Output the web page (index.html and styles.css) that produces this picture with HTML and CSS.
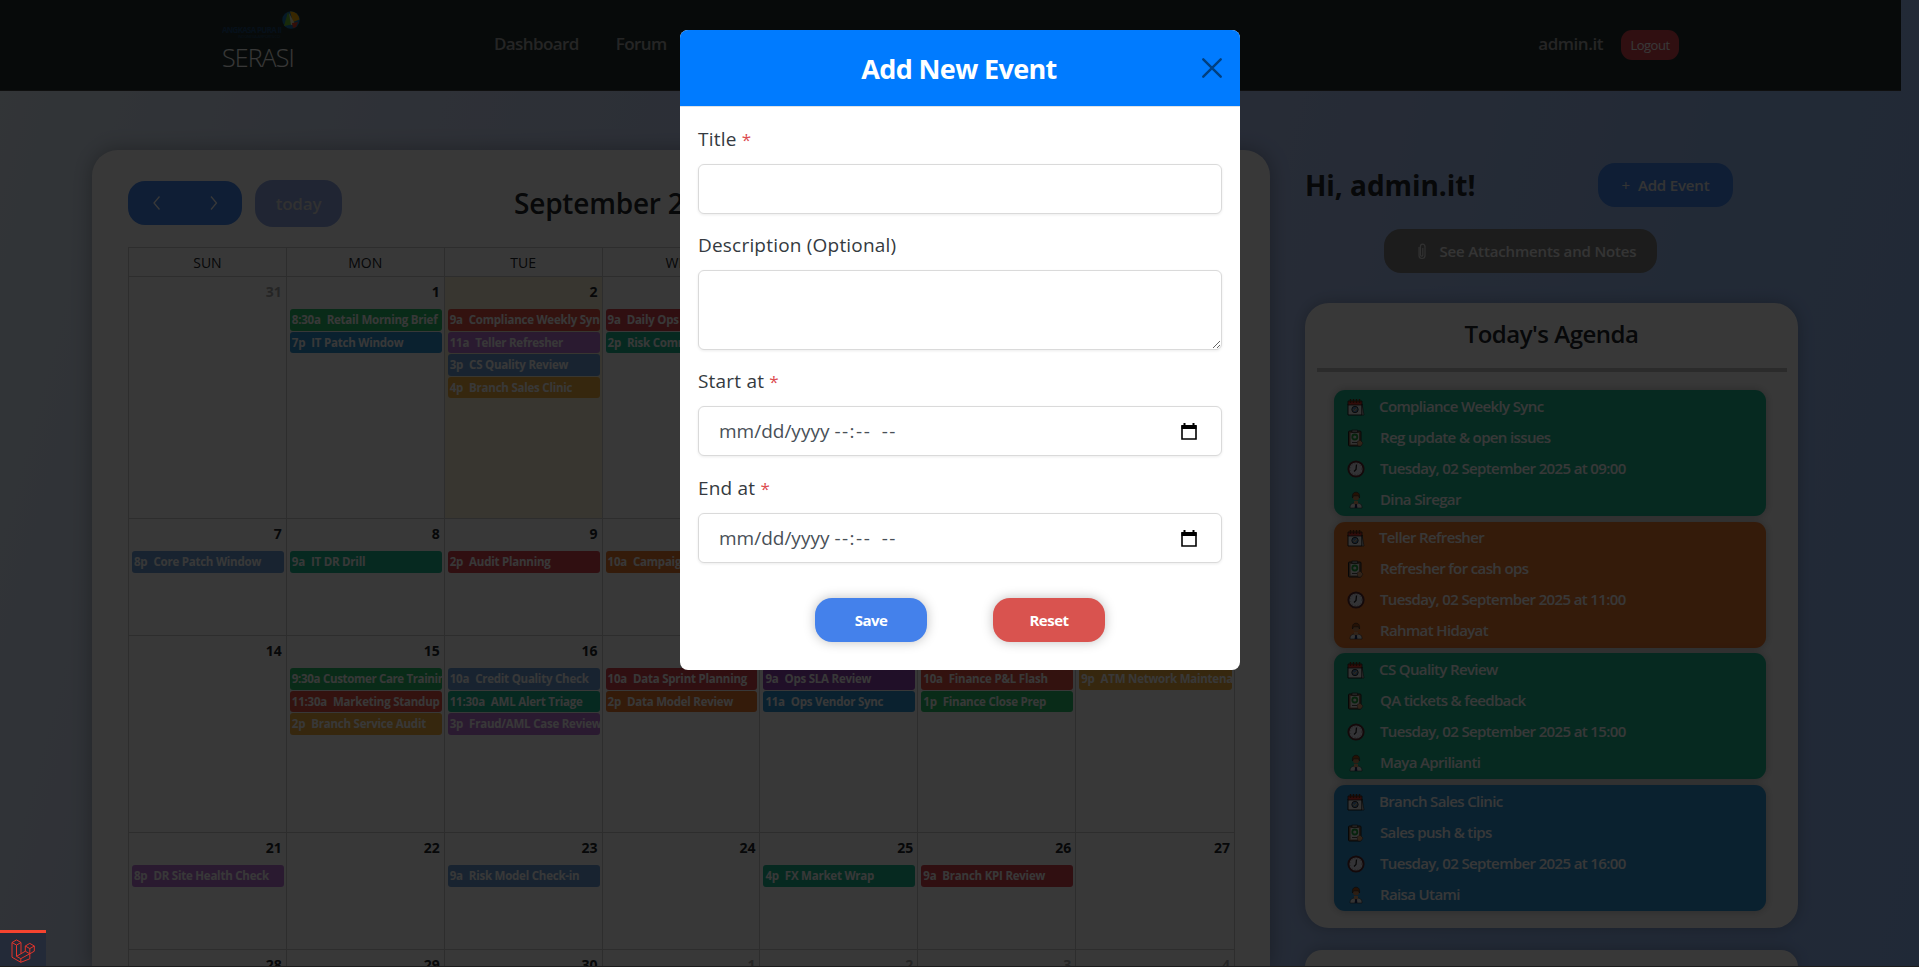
FILE: index.html
```html
<!DOCTYPE html>
<html lang="en">
<head>
<meta charset="utf-8">
<title>SERASI</title>
<link rel="stylesheet" href="styles.css">
</head>
<body>
<svg class="defs" width="0" height="0">
  <symbol id="i-cal" viewBox="0 0 18 18"><path d="M1 6h14v11H1z" fill="#eee" stroke="#222" stroke-width="1"/><path d="M1 3h14v4H1z" fill="#e03a2f" stroke="#222" stroke-width=".8"/><path d="M3.500 1v4M6.500 1v4M9.500 1v4M12.500 1v4" stroke="#5a2a10" stroke-width="1.500"/><circle cx="8" cy="11.500" r="3.200" fill="#5a8fc0" stroke="#333"/><path d="M6.500 11.500l1.200 1.300 2-2.500" stroke="#ffc060" fill="none"/><path d="M15 6l2 11h-2z" fill="#ddd" stroke="#222" stroke-width=".6"/></symbol>
  <symbol id="i-note" viewBox="0 0 18 18"><rect x="1.500" y="2" width="12.500" height="15" rx="1" fill="#8c6a50" stroke="#222"/><rect x="3.500" y="4" width="8.500" height="11.500" fill="#e8e8e8"/><rect x="5" y="1" width="5.500" height="2.600" fill="#999" stroke="#222" stroke-width=".6"/><circle cx="7.800" cy="8" r="2.500" fill="none" stroke="#1fa03c" stroke-width="1.800"/><path d="M5 13.500h5" stroke="#555"/><path d="M10 13l3-2 3 3-2 3h-3z" fill="#e0a070" stroke="#333" stroke-width=".5"/></symbol>
  <symbol id="i-clock" viewBox="0 0 18 18"><circle cx="9" cy="9" r="7.600" fill="#e8e8f4" stroke="#5a2a30" stroke-width="2"/><circle cx="9" cy="9" r="5.600" fill="none" stroke="#aaa" stroke-dasharray="1 2"/><path d="M9.500 4.500L9 9.500 7 11.500" stroke="#222" stroke-width="1.300" fill="none"/></symbol>
  <symbol id="i-man" viewBox="0 0 18 18"><path d="M3 17c0-4 2-5 6-5s6 1 6 5z" fill="#eee" stroke="#333" stroke-width=".6"/><path d="M7 10h4v3l-2 1.500L7 13z" fill="#e0a070"/><circle cx="9" cy="6.500" r="3" fill="#c88858"/><path d="M5.500 7c-.5-4 1-5.800 3.500-5.800S13 3 12.500 7L11.500 4.800h-5z" fill="#a85018" stroke="#222" stroke-width=".6"/><path d="M8.200 13h1.600l.6 4H7.600z" fill="#203060"/></symbol>
</svg>

<header class="topbar">
  <div class="brand">
    <svg class="logo" width="82" height="30" viewBox="0 0 82 30"><circle cx="69" cy="10" r="8.700" fill="#1b77b5"/><path d="M68 1.500a8.700 8.700 0 0 1 9.500 8L71 12z" fill="#ffb300"/><path d="M66 2l-4 14 8-1.500z" fill="#6fc030"/><path d="M67 3l6 11-4 1z" fill="#f0f0c0"/><path d="M70 13l6-1-2 5-3 1z" fill="#e8402a"/><text x="0" y="23" class="logo-name" textLength="60">ANGKASA PURA II</text><text x="16" y="28" class="logo-sub" textLength="42">INDONESIA AIRPORTS CO</text></svg>
    <div class="brand-name">SERASI</div>
  </div>
  <nav class="nav"><a>Dashboard</a><a>Forum</a></nav>
  <div class="user"><span class="user-name">admin.it</span><button class="logout">Logout</button></div>
</header>

<main class="page">
  <section class="calendar">
    <div class="toolbar">
      <div class="prevnext">
        <svg width="12" height="16" viewBox="0 0 12 16"><path d="M8.500 1.500L3 8l5.500 6.500"/></svg>
        <svg width="12" height="16" viewBox="0 0 12 16"><path d="M3 1.500L8.500 8 3 14.500"/></svg>
      </div>
      <button class="today">today</button>
      <h2 class="month">September 2025</h2>
    </div>
    <div class="grid">
      <div class="week head"><div>SUN</div><div>MON</div><div>TUE</div><div>WED</div><div>THU</div><div>FRI</div><div>SAT</div></div>
      <div class="week w1">
        <div class="day out"><b>31</b></div>
        <div class="day"><b>1</b><p class="ev green"><i>8:30a</i>Retail Morning Brief</p><p class="ev blue"><i>7p</i>IT Patch Window</p></div>
        <div class="day now"><b>2</b><p class="ev red"><i>9a</i>Compliance Weekly Sync</p><p class="ev violet"><i>11a</i>Teller Refresher</p><p class="ev steel"><i>3p</i>CS Quality Review</p><p class="ev gold"><i>4p</i>Branch Sales Clinic</p></div>
        <div class="day"><b>3</b><p class="ev crimson"><i>9a</i>Daily Ops</p><p class="ev teal"><i>2p</i>Risk Comm</p></div>
        <div class="day"><b>4</b></div><div class="day"><b>5</b></div><div class="day"><b>6</b></div>
      </div>
      <div class="week w2">
        <div class="day"><b>7</b><p class="ev steel"><i>8p</i>Core Patch Window</p></div>
        <div class="day"><b>8</b><p class="ev teal"><i>9a</i>IT DR Drill</p></div>
        <div class="day"><b>9</b><p class="ev crimson"><i>2p</i>Audit Planning</p></div>
        <div class="day"><b>10</b><p class="ev orange"><i>10a</i>Campaign</p></div>
        <div class="day"><b>11</b></div><div class="day"><b>12</b></div><div class="day"><b>13</b></div>
      </div>
      <div class="week w3">
        <div class="day"><b>14</b></div>
        <div class="day"><b>15</b><p class="ev green tight"><i>9:30a</i>Customer Care Training</p><p class="ev red"><i>11:30a</i>Marketing Standup</p><p class="ev gold"><i>2p</i>Branch Service Audit</p></div>
        <div class="day"><b>16</b><p class="ev steel"><i>10a</i>Credit Quality Check</p><p class="ev teal"><i>11:30a</i>AML Alert Triage</p><p class="ev violet"><i>3p</i>Fraud/AML Case Review</p></div>
        <div class="day"><b>17</b><p class="ev crimson"><i>10a</i>Data Sprint Planning</p><p class="ev orange"><i>2p</i>Data Model Review</p></div>
        <div class="day"><b>18</b><p class="ev purple"><i>9a</i>Ops SLA Review</p><p class="ev blue"><i>11a</i>Ops Vendor Sync</p></div>
        <div class="day"><b>19</b><p class="ev red"><i>10a</i>Finance P&amp;L Flash</p><p class="ev green"><i>1p</i>Finance Close Prep</p></div>
        <div class="day"><b>20</b><p class="ev gold"><i>9p</i>ATM Network Maintenance</p></div>
      </div>
      <div class="week w4">
        <div class="day"><b>21</b><p class="ev violet"><i>8p</i>DR Site Health Check</p></div>
        <div class="day"><b>22</b></div>
        <div class="day"><b>23</b><p class="ev steel"><i>9a</i>Risk Model Check-in</p></div>
        <div class="day"><b>24</b></div>
        <div class="day"><b>25</b><p class="ev teal"><i>4p</i>FX Market Wrap</p></div>
        <div class="day"><b>26</b><p class="ev crimson"><i>9a</i>Branch KPI Review</p></div>
        <div class="day"><b>27</b></div>
      </div>
      <div class="week w5">
        <div class="day"><b>28</b></div><div class="day"><b>29</b></div><div class="day"><b>30</b></div>
        <div class="day out"><b>1</b></div><div class="day out"><b>2</b></div><div class="day out"><b>3</b></div><div class="day out"><b>4</b></div>
      </div>
    </div>
  </section>

  <aside class="side">
    <div class="greet"><h2>Hi, admin.it!</h2><button class="pill add"><span class="plus">+</span>Add Event</button></div>
    <button class="pill attach"><svg width="10" height="17" viewBox="0 0 10 17"><path d="M2 4v8.500a3 3 0 0 0 6 0V3.500a2.300 2.300 0 0 0-4.600 0V12a1.200 1.200 0 0 0 2.400 0V5"/></svg>See Attachments and Notes</button>
    <div class="agenda">
      <h3>Today's Agenda</h3>
      <hr>
      <ul class="item teal">
        <li><svg><use href="#i-cal"/></svg>Compliance Weekly Sync</li><li><svg><use href="#i-note"/></svg>Reg update &amp; open issues</li><li><svg><use href="#i-clock"/></svg>Tuesday, 02 September 2025 at 09:00</li><li><svg><use href="#i-man"/></svg>Dina Siregar</li>
      </ul>
      <ul class="item orange">
        <li><svg><use href="#i-cal"/></svg>Teller Refresher</li><li><svg><use href="#i-note"/></svg>Refresher for cash ops</li><li><svg><use href="#i-clock"/></svg>Tuesday, 02 September 2025 at 11:00</li><li><svg><use href="#i-man"/></svg>Rahmat Hidayat</li>
      </ul>
      <ul class="item teal">
        <li><svg><use href="#i-cal"/></svg>CS Quality Review</li><li><svg><use href="#i-note"/></svg>QA tickets &amp; feedback</li><li><svg><use href="#i-clock"/></svg>Tuesday, 02 September 2025 at 15:00</li><li><svg><use href="#i-man"/></svg>Maya Aprilianti</li>
      </ul>
      <ul class="item blue">
        <li><svg><use href="#i-cal"/></svg>Branch Sales Clinic</li><li><svg><use href="#i-note"/></svg>Sales push &amp; tips</li><li><svg><use href="#i-clock"/></svg>Tuesday, 02 September 2025 at 16:00</li><li><svg><use href="#i-man"/></svg>Raisa Utami</li>
      </ul>
    </div>
    <div class="agenda next"></div>
  </aside>
</main>

<div class="backdrop"></div>

<div class="modal">
  <div class="modal-head">
    <h1>Add New Event</h1>
    <svg class="close" width="20" height="20" viewBox="0 0 20 20"><path d="M1.300 1.300l17.400 17.400M18.700 1.300L1.300 18.700"/></svg>
  </div>
  <form class="modal-body">
    <label>Title <em>*</em></label>
    <input class="field f-title" type="text">
    <label>Description (Optional)</label>
    <textarea class="field f-desc"></textarea>
    <label>Start at <em>*</em></label>
    <div class="field date"><span>mm/dd/yyyy <span class="time">--:-- --</span></span><svg width="16" height="17" viewBox="0 0 16 17"><path d="M1 3h14v13H1z" fill="none" stroke="#000" stroke-width="1.600"/><path d="M.5 2h15v4H.5zM2.500 0h2v3h-2zM11.500 0h2v3h-2z"/></svg></div>
    <label>End at <em>*</em></label>
    <div class="field date"><span>mm/dd/yyyy <span class="time">--:-- --</span></span><svg width="16" height="17" viewBox="0 0 16 17"><path d="M1 3h14v13H1z" fill="none" stroke="#000" stroke-width="1.600"/><path d="M.5 2h15v4H.5zM2.500 0h2v3h-2zM11.500 0h2v3h-2z"/></svg></div>
    <div class="actions"><button type="button" class="save">Save</button><button type="button" class="reset">Reset</button></div>
  </form>
</div>

<div class="debugbar"><svg width="24" height="24" viewBox="0 0 24 24"><path d="M1 3.500l4.500-2.600L10 3.500v11.200l4.300-2.500V7l4.500-2.600L23.300 7v5.200l-4.500 2.600v5L9.800 23.300 1 18.200zM1 3.500l4.500 2.600L10 3.500M5.500 6.100v11.200l4.300 2.400 9-5M10 14.700l-4.500 2.600M14.300 7l4.500 2.600L23.300 7M18.800 9.600v5.200M14.300 12.200l4.500 2.600M9.800 19.700v3.600"/></svg></div>
</body>
</html>
```
FILE: styles.css
```css
* { box-sizing: border-box; }
html { overflow: hidden; }
body {
  margin: 0; height: 967px; overflow: hidden; position: relative;
  font-family: "Open Sans", "Noto Sans", sans-serif; color: #212529;
  background: linear-gradient(105deg, #e3f0fa 0%, #d2def8 20%, #b6c8f6 55%, #9dbff6 80%, #94b9f8 100%);
}
h1, h2, h3, p, ul { margin: 0; padding: 0; }
button { border: 0; font-family: inherit; padding: 0; }
.defs { position: absolute; }

/* top bar */
.topbar { display: flex; width: 1901px; height: 91px; padding-left: 222px; background: #23312e; border-bottom: 1px solid #444; align-items: flex-start; }
.brand { width: 272px; padding-top: 10px; }
.logo { display: block; }
.logo-name { font-size: 8px; font-weight: 700; fill: #1c4a78; }
.logo-sub { font-size: 4px; fill: #1c4a78; }
.brand-name { margin-top: -1px; font-size: 25px; line-height: 36px; font-weight: 300; color: #fff; letter-spacing: -.9px; }
.nav { display: flex; gap: 37px; padding-top: 29px; font-size: 17px; line-height: 30px; font-weight: 600; color: #aaa; letter-spacing: -.6px; }
.user { display: flex; gap: 18px; margin-left: auto; margin-right: 222px; padding-top: 30px; color: #aaa; }
.user-name { font-size: 17px; line-height: 28px; font-weight: 600; letter-spacing: -.45px; }
.logout { width: 58px; height: 30px; border-radius: 11px; background: #dc4550; color: #fff; font-size: 13px; letter-spacing: -.5px; }

/* page */
.page { display: flex; gap: 35px; padding: 59px 0 0 92px; }
.calendar { width: 1178px; height: 817px; margin-bottom: -9px; background: #fff; border-radius: 26px 26px 0 0; padding: 30px 36px 0; box-shadow: 0 0 20px rgba(0,0,0,.3); overflow: hidden; }
.toolbar { display: flex; align-items: center; height: 47px; }
.prevnext { display: flex; align-items: center; justify-content: space-around; width: 114px; height: 44px; margin-bottom: 2px; border-radius: 17px; background: #4488f0; }
.prevnext svg { fill: none; stroke: #fff; stroke-width: 1.300; }
.today { width: 87px; height: 47px; margin-left: 13px; border-radius: 18px; background: #90a9e8; color: #ddd; font-size: 17px; font-weight: 600; letter-spacing: -.2px; }
.month { margin: -2px 0 0 172px; font-size: 28px; font-weight: 600; letter-spacing: -.2px; }
.grid { margin-top: 20px; border: 1px solid #ccc; width: 1107px; }
.week { display: grid; grid-template-columns: repeat(7, minmax(0, 1fr)); border-bottom: 1px solid #ccc; overflow: hidden; }
.week > div { border-right: 1px solid #ccc; }
.week > div:last-child { border-right: 0; }
.head { height: 29px; }
.head > div { text-align: center; font-size: 14px; line-height: 29px; font-weight: 500; }
.w1 { height: 242px; } .w2 { height: 117px; } .w3 { height: 197px; } .w4 { height: 117px; } .w5 { height: 18px; border-bottom: 0; }
.day { padding: 0 2px 0 3px; }
.day b { display: block; height: 32px; line-height: 30px; padding-right: 2px; text-align: right; font-size: 14px; }
.out b { color: #aaa; }
.now { background: #fdf3dc; }
.ev { height: 21.500px; margin-bottom: 1px; padding-left: 2px; border-radius: 3px; color: #fff; font-size: 11.500px; line-height: 21.500px; font-weight: 700; white-space: nowrap; overflow: hidden; letter-spacing: -.23px; }
.ev i { font-style: normal; margin-right: 6px; }
.tight { letter-spacing: -.35px; }
.tight i { margin-right: 3px; }
.green { background: #2bc46c; } .blue { background: #2f95d5; } .red { background: #e65545; } .crimson { background: #dc4450; }
.violet { background: #c078dc; } .purple { background: #9444b4; } .steel { background: #6fa0d8; } .gold { background: #f5b040; }
.teal { background: #1cba94; } .orange { background: #ec7a30; }

/* side column */
.side { width: 493px; padding-top: 13px; }
.greet { display: flex; justify-content: space-between; align-items: center; height: 44px; padding-right: 65px; }
.greet h2 { font-size: 28px; font-weight: 700; letter-spacing: -.05px; margin-top: 0; }
.pill { display: flex; align-items: center; justify-content: center; height: 44px; border-radius: 17px; color: #eee; font-size: 15px; font-weight: 600; letter-spacing: -.15px; }
.add { width: 135px; background: #4488f0; }
.plus { font-weight: 400; margin-right: 8px; }
.attach { width: 273px; margin: 22px 0 0 79px; background: #808080; gap: 13px; padding-left: 12px; }
.attach svg { fill: none; stroke: #ddd; stroke-width: 1.200; }
.agenda { margin-top: 30px; height: 625px; padding: 0 32px 0 29px; background: #fff; border-radius: 24px; box-shadow: 0 0 16px rgba(0,0,0,.25); }
.agenda h3 { height: 65px; padding: 15px 0 0 3px; font: 600 24px/32px "Open Sans", sans-serif; letter-spacing: -.5px; text-align: center; }
.agenda hr { height: 4px; border: 0; margin: 0 -21px 18px -17px; background: #c4c4c4; }
.item { list-style: none; width: 432px; height: 126px; margin-bottom: 5.700px; padding: 0 0 0 13px; border-radius: 11px; box-shadow: 0 0 10px rgba(0,0,0,.25); }
.item li { display: flex; align-items: center; height: 31px; gap: 15px; color: #fff; font-size: 15px; font-weight: 600; letter-spacing: -.63px; }
.item li:first-child { gap: 14px; }
.item svg { width: 18px; height: 18px; margin-top: 2px; }
.agenda.next { margin-top: 22px; height: 17px; border-radius: 24px 24px 0 0; }

.backdrop { position: absolute; inset: 0; background: rgba(0,0,0,.78); border-bottom: 1px solid #1c1c1c; }

/* modal */
.modal { position: absolute; left: 680px; top: 30px; width: 560px; height: 640px; background: #fff; border-radius: 8px; overflow: hidden; }
.modal-head { position: relative; display: flex; align-items: center; justify-content: center; height: 77px; background: #007bff; border-bottom: 1px solid #dee2e6; }
.modal-head h1 { font-size: 27px; font-weight: 700; color: #fff; letter-spacing: -.65px; padding: 0 2px 0 0; }
.close { position: absolute; right: 18px; top: 28px; stroke: #003f80; stroke-width: 2.400; stroke-linecap: round; }
.modal-body { display: flex; flex-direction: column; padding: 0 18px; }
.modal label { height: 28px; font-size: 19px; line-height: 27px; font-weight: 500; color: #343a40; letter-spacing: .2px; }
.modal label:first-child { margin-top: 19px; }
.modal em { font-style: normal; color: #dc4c50; font-weight: 400; font-size: 17px; line-height: 1; }
.field { display: block; flex: none; width: 524px; border: 1px solid #dadada; border-radius: 6px; background: #fff; box-shadow: 0 1px 3px rgba(0,0,0,.08); outline: 0; margin: 10px 0 18px; }
.f-title { height: 50px; }
.f-desc { height: 80px; }
.date { display: flex; justify-content: space-between; align-items: center; height: 50px; padding: 0 24px 0 20px; font-size: 19px; color: #495057; margin-bottom: 19px; }
.time { letter-spacing: 1.500px; word-spacing: 4px; }
.actions { display: flex; justify-content: center; gap: 66px; margin-top: 16px; }
.actions button { width: 112px; height: 44px; border-radius: 17px; color: #fff; font-size: 15px; font-weight: 700; letter-spacing: -.5px; box-shadow: 0 0 12px rgba(0,0,0,.25); }
.actions .save { background: #4481eb; }
.actions .reset { background: #d9534f; }

/* debug toolbar */
.debugbar { position: absolute; left: 0; top: 930px; width: 46px; height: 36px; border-top: 3px solid #f4432f; background: #232a38; padding: 6px 0 0 11px; }
.debugbar svg { fill: none; stroke: #e0352c; stroke-width: 1; }
```
